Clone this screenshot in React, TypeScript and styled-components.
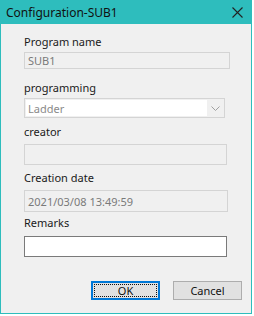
import styled, { createGlobalStyle } from "styled-components";

const Global = createGlobalStyle`
  html, body { margin: 0; padding: 0; background: #ffffff; }
  body { font-family: "Noto Sans", "Liberation Sans", sans-serif; }
`;

const Window = styled.div`
  width: 252px;
  height: 314px;
  box-sizing: border-box;
  border: 1px solid #2ebdbd;
  border-top: none;
  background: #f0f0f0;
  display: flex;
  flex-direction: column;
`;

const TitleBar = styled.div`
  height: 24px;
  margin: 0 -1px;
  background: #2ebdbd;
  display: flex;
  align-items: center;
  justify-content: space-between;
  padding: 0 9px 0 6px;
  color: #111;
  font-size: 12px;
`;

const Body = styled.div`
  flex: 1;
  display: flex;
  flex-direction: column;
  padding: 0 0 0 23px;
`;

const Field = styled.div<{ $top: number }>`
  margin-top: ${(p) => p.$top}px;
  display: flex;
  flex-direction: column;
`;

const Label = styled.div<{ $gap: number }>`
  height: 16px;
  line-height: 16px;
  font-size: 11px;
  color: #1a1a1a;
  margin-bottom: ${(p) => p.$gap}px;
`;

const TextBox = styled.div<{ $w: number; $h: number; $white?: boolean }>`
  width: ${(p) => p.$w}px;
  height: ${(p) => p.$h}px;
  box-sizing: border-box;
  border: 1px solid ${(p) => (p.$white ? "#7a7a7a" : "#d4d4d4")};
  background: ${(p) => (p.$white ? "#ffffff" : "#f0f0f0")};
  color: #7a7a7a;
  font-size: 11px;
  display: flex;
  align-items: center;
  padding-left: 3px;
`;

const Select = styled.div`
  width: 201px;
  height: 20px;
  box-sizing: border-box;
  border: 1px solid #d4d4d4;
  background: #f0f0f0;
  display: flex;
  align-items: stretch;
  padding: 1px;
`;

const SelectValue = styled.div`
  flex: 0 0 179px;
  background: #ffffff;
  color: #8a8a8a;
  font-size: 11px;
  display: flex;
  align-items: center;
  padding-left: 2px;
`;

const Chevron = styled.div`
  flex: 1;
  display: flex;
  align-items: center;
  justify-content: center;
`;

const Buttons = styled.div`
  margin-top: 24px;
  display: flex;
  padding-left: 67px;
  gap: 13px;
`;

const Button = styled.div<{ $default?: boolean }>`
  width: 69px;
  height: 19px;
  box-sizing: border-box;
  border: ${(p) => (p.$default ? "2px solid #0078d7" : "1px solid #adadad")};
  background: #e1e1e1;
  font-size: 11px;
  color: #111;
  display: flex;
  align-items: center;
  justify-content: center;
  position: relative;
`;

const Focus = styled.div`
  position: absolute;
  inset: 1px;
  border: 1px dotted #111;
`;

export default function App() {
  return (
    <>
      <Global />
      <Window>
        <TitleBar>
          <span>Configuration-SUB1</span>
          <svg width="11" height="11" viewBox="0 0 11 11">
            <path d="M0.5 0.5L10.5 10.5M10.5 0.5L0.5 10.5" stroke="#222" strokeWidth="1.1" />
          </svg>
        </TitleBar>
        <Body>
          <Field $top={10}>
            <Label $gap={2}>Program name</Label>
            <TextBox $w={206} $h={17}>SUB1</TextBox>
          </Field>
          <Field $top={11}>
            <Label $gap={2}>programming</Label>
            <Select>
              <SelectValue>Ladder</SelectValue>
              <Chevron>
                <svg width="9" height="5" viewBox="0 0 9 5">
                  <path d="M0.5 0.5L4.5 4.5L8.5 0.5" stroke="#a0a0a0" fill="none" />
                </svg>
              </Chevron>
            </Select>
          </Field>
          <Field $top={6}>
            <Label $gap={4}>creator</Label>
            <TextBox $w={203} $h={21} />
          </Field>
          <Field $top={5}>
            <Label $gap={4}>Creation date</Label>
            <TextBox $w={204} $h={22}>2021/03/08 13:49:59</TextBox>
          </Field>
          <Field $top={3}>
            <Label $gap={5}>Remarks</Label>
            <TextBox $w={203} $h={21} $white />
          </Field>
          <Buttons>
            <Button $default>
              <Focus />
              OK
            </Button>
            <Button>Cancel</Button>
          </Buttons>
        </Body>
      </Window>
    </>
  );
}
